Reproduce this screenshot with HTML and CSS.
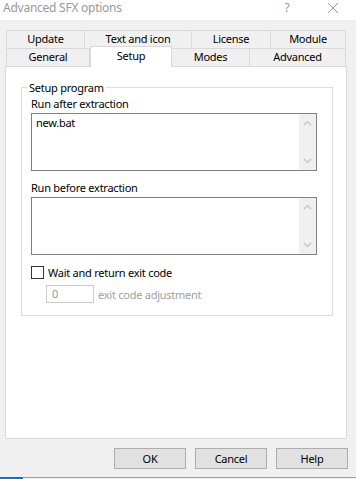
FILE: index.html
```html
<!DOCTYPE html>
<html lang="en">

<head>
    <meta charset="UTF-8">
    <title>Advanced SFX options</title>
    <link rel="stylesheet" href="styles.css">
</head>

<body>
    <div class="titlebar">
        <span class="title">Advanced SFX options</span>
        <span class="title-help">?</span>
        <span class="title-close">
            <svg width="12" height="12" viewBox="0 0 12 12"><path d="M1 1 L11 11 M11 1 L1 11" stroke="#9a9a9a" stroke-width="1" fill="none"/></svg>
        </span>
    </div>

    <div class="dialog">
        <div class="tab-row back">
            <div class="tab w-update">Update</div>
            <div class="tab w-text">Text and icon</div>
            <div class="tab w-license">License</div>
            <div class="tab w-module">Module</div>
        </div>
        <div class="tab-row front">
            <div class="tab w-general">General</div>
            <div class="tab w-setup active">Setup</div>
            <div class="tab w-modes">Modes</div>
            <div class="tab w-advanced">Advanced</div>
        </div>

        <div class="panel">
            <fieldset class="group">
                <legend>Setup program</legend>

                <div class="field-label">Run after extraction</div>
                <div class="memo">
                    <div class="memo-text">new.bat</div>
                    <div class="scroll">
                        <svg width="9" height="6" viewBox="0 0 9 6"><path d="M1 5 L4.5 1.5 L8 5" stroke="#c2c2c2" stroke-width="1.2" fill="none"/></svg>
                        <svg width="9" height="6" viewBox="0 0 9 6"><path d="M1 1 L4.5 4.5 L8 1" stroke="#c2c2c2" stroke-width="1.2" fill="none"/></svg>
                    </div>
                </div>

                <div class="field-label second">Run before extraction</div>
                <div class="memo">
                    <div class="memo-text"></div>
                    <div class="scroll">
                        <svg width="9" height="6" viewBox="0 0 9 6"><path d="M1 5 L4.5 1.5 L8 5" stroke="#c2c2c2" stroke-width="1.2" fill="none"/></svg>
                        <svg width="9" height="6" viewBox="0 0 9 6"><path d="M1 1 L4.5 4.5 L8 1" stroke="#c2c2c2" stroke-width="1.2" fill="none"/></svg>
                    </div>
                </div>

                <label class="check-row">
                    <span class="checkbox"></span>
                    <span>Wait and return exit code</span>
                </label>

                <div class="adjust-row">
                    <div class="small-input">0</div>
                    <span class="adjust-label">exit code adjustment</span>
                </div>
            </fieldset>
        </div>

        <div class="buttons">
            <button class="btn">OK</button>
            <button class="btn">Cancel</button>
            <button class="btn">Help</button>
        </div>
    </div>

    <div class="taskbar">
        <div class="task-blue"></div>
        <div class="task-gray"></div>
    </div>
</body>

</html>
```

FILE: styles.css
```css
body {
    margin: 0;
    padding: 0;
    width: 356px;
    height: 479px;
    background-color: #f0f0f0;
    font-family: "Noto Sans", "Open Sans", sans-serif;
    font-size: 11px;
    letter-spacing: -0.25px;
    color: #000;
    display: flex;
    flex-direction: column;
    overflow: hidden;
}

.titlebar {
    height: 20px;
    background-color: #fff;
    display: flex;
    align-items: center;
    color: #999;
    font-size: 12px;
}

.title {
    padding-left: 3px;
    flex: 1;
    margin-top: -5px;
}

.title-help {
    width: 46px;
    text-align: center;
    margin-top: -5px;
}

.title-close {
    width: 46px;
    display: flex;
    justify-content: center;
    margin-top: -5px;
}

.dialog {
    flex: 1;
    padding: 10px 9px 0 5px;
    display: flex;
    flex-direction: column;
}

.tab-row {
    display: flex;
    height: 18px;
    margin: 0 1px;
}

.tab {
    box-sizing: border-box;
    height: 18px;
    background-color: #f0f0f0;
    border: 1px solid #d9d9d9;
    border-bottom: none;
    border-left: none;
    text-align: center;
    line-height: 16px;
}

.tab:first-child {
    border-left: 1px solid #d9d9d9;
}

.w-update { width: 79px; }
.w-text { width: 107px; }
.w-license { width: 79px; }
.w-module { width: 75px; }
.w-general { width: 84px; }
.w-setup { width: 82px; }
.w-modes { width: 78px; }
.w-advanced { width: 96px; }

.front {
    position: relative;
    z-index: 2;
}

.tab.active {
    background-color: #fff;
    height: 21px;
    margin-top: -2px;
    border-left: 1px solid #d9d9d9;
    line-height: 17px;
}

.panel {
    background-color: #fff;
    border: 1px solid #d9d9d9;
    height: 373px;
    box-sizing: border-box;
    padding: 13px 13px 0 15px;
}

.group {
    margin: 0;
    border: 1px solid #dcdcdc;
    padding: 0 15px 0 9px;
    height: 236px;
    box-sizing: border-box;
}

.group legend {
    padding: 0 2px;
    margin-left: -4px;
}

.field-label {
    margin-top: 1px;
    height: 15px;
    line-height: 15px;
}

.field-label.second {
    margin-top: 9px;
}

.memo {
    display: flex;
    height: 58px;
    border: 1px solid #828282;
    box-sizing: border-box;
    margin-top: 2px;
}

.memo-text {
    flex: 1;
    padding: 2px 4px;
    line-height: 14px;
}

.scroll {
    width: 17px;
    background-color: #f0f0f0;
    display: flex;
    flex-direction: column;
    justify-content: space-between;
    align-items: center;
    padding: 6px 0;
}

.check-row {
    display: flex;
    align-items: center;
    gap: 4px;
    margin-top: 10px;
    height: 14px;
}

.checkbox {
    width: 13px;
    height: 13px;
    box-sizing: border-box;
    border: 1px solid #333;
    background-color: #fff;
}

.adjust-row {
    display: flex;
    align-items: center;
    gap: 4px;
    margin-top: 6px;
    padding-left: 15px;
}

.small-input {
    width: 48px;
    height: 18px;
    box-sizing: border-box;
    border: 1px solid #ccc;
    color: #999;
    padding-left: 5px;
    line-height: 16px;
}

.adjust-label {
    color: #a0a0a0;
}

.buttons {
    display: flex;
    justify-content: flex-end;
    gap: 9px;
    margin-top: 9px;
    margin-right: -1px;
}

.btn {
    width: 72px;
    height: 21px;
    background-color: #e1e1e1;
    border: 1px solid #adadad;
    font-family: inherit;
    font-size: 11px;
    letter-spacing: inherit;
    color: #000;
    padding: 0;
}

.taskbar {
    display: flex;
    height: 2px;
}

.task-blue {
    width: 23px;
    background-color: #0078d7;
}

.task-gray {
    flex: 1;
    background-color: #a0a0a0;
    height: 1px;
}
```
